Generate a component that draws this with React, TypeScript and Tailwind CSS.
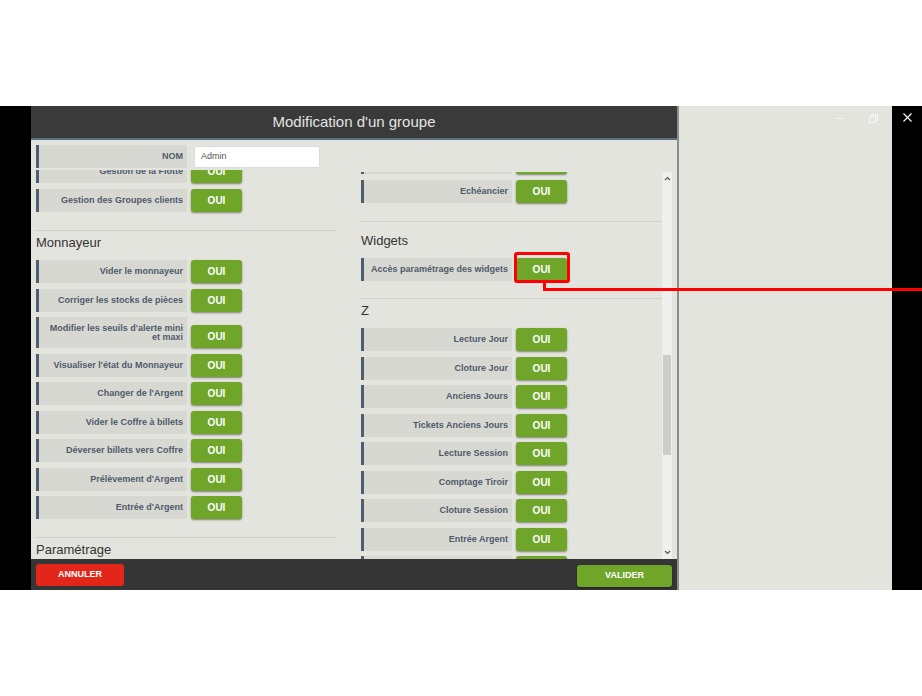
import React from 'react';

type RowProps = { label: React.ReactNode; tall?: boolean; highlight?: boolean };

function Row({ label, tall, highlight }: RowProps) {
  return (
    <div className={`flex items-end shrink-0 ${tall ? 'h-[31px]' : 'h-[23px]'}`}>
      <div className="w-[151px] h-full border-l-[3px] border-[#4e5e70] bg-[#d8d8d3] flex items-center justify-end pr-[4px] text-right text-[9px] leading-[9px] font-bold text-[#4f5a6a]">
        <span>{label}</span>
      </div>
      <div className="relative ml-[4px]">
        <button className="w-[51px] h-[23px] rounded-[3px] bg-[#6fa62a] text-white text-[10px] font-bold shadow-[0_1px_2px_rgba(0,0,0,0.45)]">
          OUI
        </button>
        {highlight && (
          <div className="absolute -left-[2px] -right-[3px] -top-[4px] -bottom-[2px] border-[3px] border-[#ff0000] rounded-[3px]"></div>
        )}
      </div>
    </div>
  );
}

function Divider() {
  return <div className="h-px bg-[#d0d0cb] shrink-0"></div>;
}

function Heading({ children, className = '' }: { children: React.ReactNode; className?: string }) {
  return <div className={`h-[16px] leading-[16px] text-[13px] text-[#333] shrink-0 ${className}`}>{children}</div>;
}

export default function App() {
  return (
    <div className="relative w-[922px] h-[696px] bg-white overflow-hidden font-['Liberation_Sans',Arial,sans-serif]">
      <div className="h-[106px]"></div>

      <div className="flex h-[484px]">
        {/* left black strip */}
        <div className="w-[31px] bg-black"></div>

        {/* Dialog */}
        <div className="w-[646px] flex flex-col">
          <div className="h-[34px] bg-[#3a3a3a] border-b-2 border-[#5c7084] flex items-center justify-center text-[15px] text-[#e4e4e4]">
            Modification d'un groupe
          </div>

          <div className="h-[419px] bg-[#e4e4df] flex flex-col">
            {/* NOM */}
            <div className="h-[30px] pt-[5px] pl-[5px] flex shrink-0">
              <div className="flex h-[23px]">
                <div className="w-[151px] h-full border-l-[3px] border-[#4e5e70] bg-[#d8d8d3] flex items-center justify-end pr-[4px] text-[9px] font-bold text-[#4f5a6a]">
                  NOM
                </div>
                <div className="ml-[7px] w-[126px] h-[22px] mt-[1px] bg-white border border-[#dcdcdc] rounded-[2px] flex items-center pl-[6px] text-[9px] text-[#555]">
                  Admin
                </div>
              </div>
            </div>

            <div className="flex flex-1 min-h-0">
              {/* Left column */}
              <div className="w-[300px] ml-[5px] overflow-hidden">
                <div className="-mt-[10px] flex flex-col">
                  <div className="flex flex-col gap-[5.5px]">
                    <Row label="Gestion de la Flotte" />
                    <Row label="Gestion des Groupes clients" />
                  </div>
                  <div className="mt-[18.5px]"><Divider /></div>
                  <Heading className="mt-[3.5px]">Monnayeur</Heading>
                  <div className="mt-[9.5px] flex flex-col gap-[5.5px]">
                    <Row label="Vider le monnayeur" />
                    <Row label="Corriger les stocks de pièces" />
                    <Row tall label={<>Modifier les seuils d'alerte mini<br />et maxi</>} />
                    <Row label="Visualiser l'état du Monnayeur" />
                    <Row label="Changer de l'Argent" />
                    <Row label="Vider le Coffre à billets" />
                    <Row label="Déverser billets vers Coffre" />
                    <Row label="Prélèvement d'Argent" />
                    <Row label="Entrée d'Argent" />
                  </div>
                  <div className="mt-[18px]"><Divider /></div>
                  <Heading className="mt-[4px]">Paramétrage</Heading>
                </div>
              </div>

              <div className="w-[25px]"></div>

              {/* Right column */}
              <div className="w-[301px] mt-[2px] overflow-hidden">
                <div className="-mt-[21px] flex flex-col">
                  <div className="flex flex-col gap-[5.5px]">
                    <Row label="Règlements" />
                    <Row label="Echéancier" />
                  </div>
                  <div className="mt-[18.5px]"><Divider /></div>
                  <Heading className="mt-[11px]">Widgets</Heading>
                  <div className="mt-[9px]">
                    <Row highlight label="Accès paramétrage des widgets" />
                  </div>
                  <div className="mt-[17px]"><Divider /></div>
                  <Heading className="mt-[3.5px]">Z</Heading>
                  <div className="mt-[9.5px] flex flex-col gap-[5.5px]">
                    <Row label="Lecture Jour" />
                    <Row label="Cloture Jour" />
                    <Row label="Anciens Jours" />
                    <Row label="Tickets Anciens Jours" />
                    <Row label="Lecture Session" />
                    <Row label="Comptage Tiroir" />
                    <Row label="Cloture Session" />
                    <Row label="Entrée Argent" />
                    <Row label="Sortie Argent" />
                  </div>
                </div>
              </div>

              {/* Scrollbar */}
              <div className="w-[10px] mt-[2px] bg-[#efefed] flex flex-col items-center">
                <svg width="7" height="5" viewBox="0 0 7 5" className="mt-[4px] shrink-0">
                  <path d="M1 4 L3.5 1.5 L6 4" stroke="#555" strokeWidth="1.2" fill="none" />
                </svg>
                <div className="mt-[174px] w-[8px] h-[100px] bg-[#cdcdcb] shrink-0"></div>
                <div className="flex-1"></div>
                <svg width="7" height="5" viewBox="0 0 7 5" className="mb-[4px] shrink-0">
                  <path d="M1 1 L3.5 3.5 L6 1" stroke="#555" strokeWidth="1.2" fill="none" />
                </svg>
              </div>
            </div>
          </div>

          {/* Footer */}
          <div className="h-[31px] bg-[#353535] flex items-center justify-between px-[5px]">
            <button className="w-[88px] h-[22px] rounded-[3px] bg-[#e3261a] text-white text-[9px] font-bold">
              ANNULER
            </button>
            <button className="w-[95px] h-[22px] mt-[2px] rounded-[3px] bg-[#6fa62a] text-white text-[9px] font-bold shadow-[0_1px_2px_rgba(0,0,0,0.4)]">
              VALIDER
            </button>
          </div>
        </div>

        {/* Right panel */}
        <div className="w-[215px] bg-[#e4e4df] border-l-2 border-[#8d8d8d] flex justify-end items-start pt-[7px] pr-[14px] gap-[25px]">
          <svg width="9" height="9" viewBox="0 0 9 9" className="mt-px">
            <path d="M0 4.5 H9" stroke="#f4f4f4" strokeWidth="1" />
          </svg>
          <svg width="9" height="9" viewBox="0 0 9 9" className="mt-px">
            <rect x="0.5" y="2.5" width="6" height="6" stroke="#f8f8f8" strokeWidth="1" fill="none" />
            <path d="M2.5 2.5 V0.5 H8.5 V6.5 H6.5" stroke="#f8f8f8" strokeWidth="1" fill="none" />
          </svg>
        </div>

        {/* Right black strip */}
        <div className="w-[30px] bg-black flex justify-center pt-[7px]">
          <svg width="9" height="9" viewBox="0 0 9 9">
            <path d="M0.5 0.5 L8.5 8.5 M8.5 0.5 L0.5 8.5" stroke="#ffffff" strokeWidth="1.1" />
          </svg>
        </div>
      </div>

      {/* Annotation connector */}
      <div className="absolute left-[543px] top-[282px] w-[3px] h-[9px] bg-[#ff0000]"></div>
      <div className="absolute left-[543px] top-[288px] w-[379px] h-[3px] bg-[#ff0000]"></div>
    </div>
  );
}
